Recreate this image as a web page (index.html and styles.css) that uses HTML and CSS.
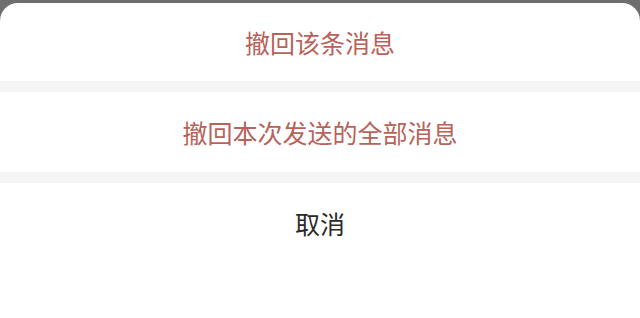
FILE: index.html
```html
<html>
<head>
    <meta http-equiv="Content-Type" content="text/html;charset=utf-8">
    <link rel="stylesheet" href="styles.css">
</head>
<body>
    <div id="sheet">
        <div class="item danger first">撤回该条消息</div>
        <div class="gap"></div>
        <div class="item danger">撤回本次发送的全部消息</div>
        <div class="gap"></div>
        <div class="item cancel">取消</div>
    </div>
</body>
</html>
```

FILE: styles.css
```css
html, body {
    margin: 0;
    padding: 0;
    background-color: #6e6e6e;
    height: 318px;
    overflow: hidden;
}

#sheet {
    margin-top: 3px;
    background-color: #fff;
    border-radius: 18px 18px 0 0;
    height: 315px;
    font-family: "Noto Sans CJK SC", sans-serif;
}

.item {
    display: flex;
    align-items: center;
    justify-content: center;
    height: 80px;
    font-size: 25px;
}

.first {
    height: 78px;
}

.danger {
    color: #b8625a;
}

.cancel {
    color: #2a2a2a;
    height: 80px;
}

.gap {
    height: 11px;
    background-color: #f5f5f5;
}
```
